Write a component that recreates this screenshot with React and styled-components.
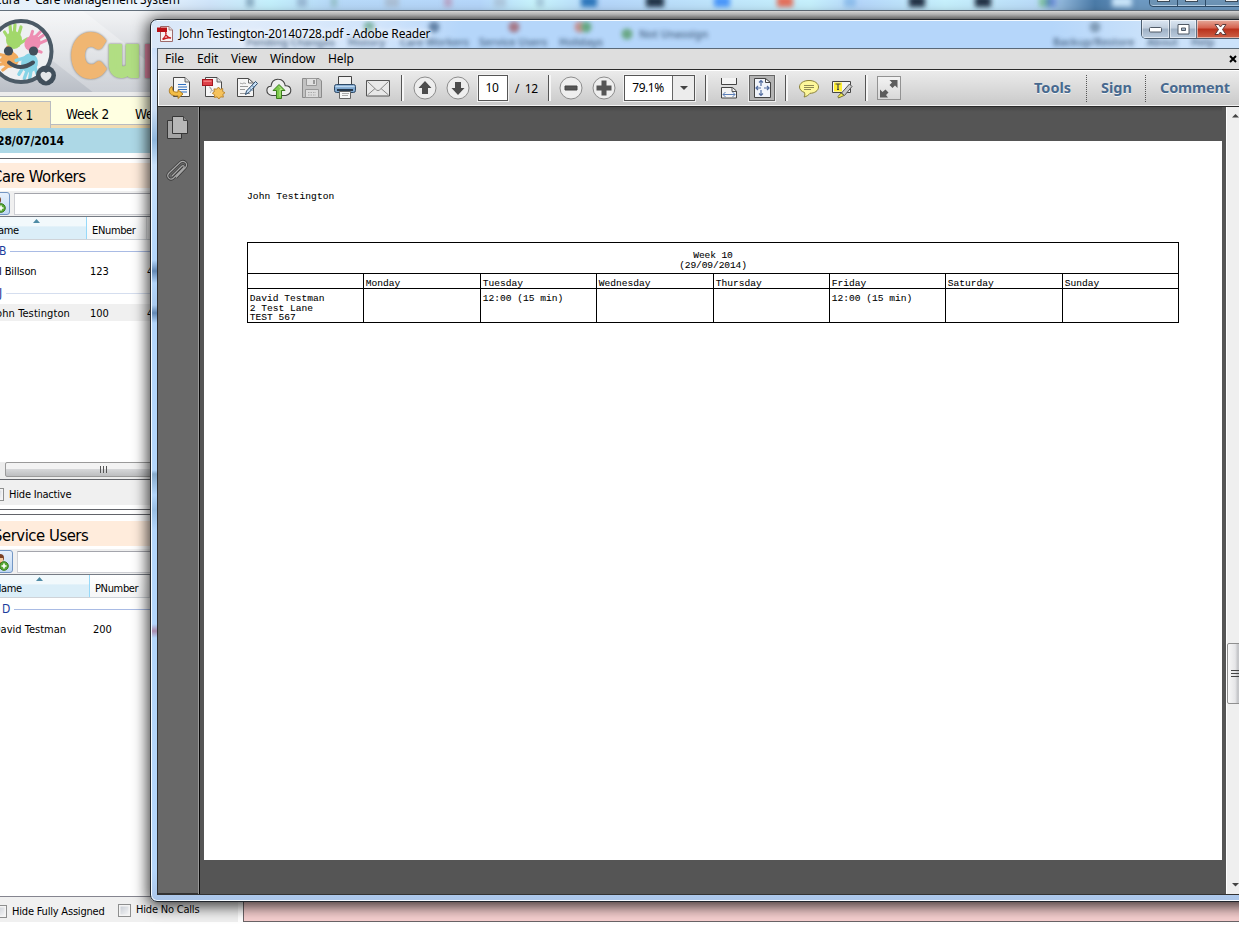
import React from "react";
import styled, { createGlobalStyle, css } from "styled-components";

const tahoma = `"DejaVu Sans Condensed", "DejaVu Sans", sans-serif`;
const segoe = `"Noto Sans", "Open Sans", sans-serif`;

const Global = createGlobalStyle`
  * { box-sizing: border-box; }
  html, body { margin: 0; padding: 0; background: #fff; }
  body { overflow: hidden; font-family: ${segoe}; font-size: 12px; color: #000; }
  svg { display: block; flex: none; }
`;

const Desktop = styled.main`
  position: relative;
  width: 1239px;
  height: 927px;
  overflow: hidden;
  background: #fff;
`;

/* ---------- Cura application behind the reader ---------- */
const CuraApp = styled.div`
  width: 1259px;
  height: 927px;
  margin-left: -20px;
  display: flex;
  flex-direction: column;
`;
const CuraTitle = styled.div`
  position: relative;
  height: 11px;
  flex: none;
  border-bottom: 1px solid #64707c;
  background: linear-gradient(90deg, #e4effa 0, #edf5fc 150px, #d0e5fa 230px, #c4f0fc 290px, #b7d9f8 350px, #b5d6fa 500px, #c8f4fc 555px, #b5d6fa 620px, #c6f0fc 830px, #b5d6fa 880px, #c6f0fc 965px, #b9daf8 1060px, #4b7ba8 1115px, #6d99c2 1160px);
  overflow: hidden;
`;
const CuraTitleText = styled.div`
  line-height: 16px;
  margin: -8px 0 0 14px;
  white-space: pre;
  font-size: 12px;
  letter-spacing: -0.18px;
`;
const GlassBlobs = styled.svg`
  position: absolute;
  left: 20px;
  top: 0;
`;
const BackButtons = styled.div`
  position: absolute;
  left: 1169px;
  top: -12px;
  width: 110px;
  height: 19px;
  display: flex;
  border: 1px solid #2f4d69;
  border-radius: 0 0 4px 4px;
  box-shadow: inset 0 -1px 0 #b5cfe6;
  background: #6d94b6;
`;
const BackButton = styled.span`
  width: ${p => p.$w}px;
  border-right: 1px solid #2f4d69;
  display: flex;
  align-items: flex-end;
  justify-content: center;
  &::after { content: ""; width: 11px; height: 6px; margin-bottom: 4px; border: 1px solid #3b4a58; background: #f3f3f3; }
`;
const Banner = styled.div`
  height: 86px;
  flex: none;
  display: flex;
  padding-left: 20px;
  border-bottom: 1px solid #a9adb2;
  background:
    linear-gradient(#ececec, #ececec) 0 81px / 100% 4px no-repeat,
    linear-gradient(38deg, transparent 0 72px, rgba(255, 255, 255, 0.28) 73px 130px, transparent 131px),
    linear-gradient(180deg, #f3f4f6 0, #dcdfe3 35px, #b9bec6 81px);
`;
const RibbonEdge = styled.div`
  width: 1009px;
  margin-left: auto;
  background: linear-gradient(180deg, #efefef 0, #dcdcdc 4px, #9a9a9a 9px);
`;
const Wordmark = styled.div`
  display: flex;
  width: 107px;
  margin-left: 17px;
  overflow: visible;
  font: 900 54px/86px Lato, sans-serif;
`;
const Letter = styled.span`
  display: block;
  width: ${p => p.$w}px;
  color: ${p => p.$c};
  -webkit-text-stroke: ${p => p.$stroke}px ${p => p.$c};
  transform: scaleX(${p => p.$s});
  transform-origin: left;
  margin-top: ${p => p.$top || 1}px;
  filter: drop-shadow(0 0 1px #777);
`;
const WeekTabs = styled.div`
  height: 31px;
  flex: none;
  display: flex;
  align-items: flex-start;
  background: #ffffe1;
  border-bottom: 3px solid #f2ddb3;
`;
const WeekTab = styled.div`
  height: ${p => (p.$on ? 27 : 28)}px;
  margin-top: ${p => (p.$on ? 4 : 0)}px;
  padding-top: ${p => (p.$on ? 4 : 8)}px;
  padding-left: ${p => p.$pad}px;
  width: ${p => p.$w}px;
  font: 13.5px/18px ${tahoma};
  letter-spacing: -0.3px;
  white-space: nowrap;
  overflow: hidden;
  ${p => p.$on ? css`background: #f3dfb6; border: 1px solid #b9bcc0; border-bottom: 0;` : css`border-bottom: 1px solid #b9bcc0;`}
`;
const DateBar = styled.div`
  height: 25px;
  flex: none;
  padding-left: 17px;
  background: #add8e6;
  font: bold 12px/27px ${tahoma};
  letter-spacing: -0.1px;
`;
const Rule = styled.div`
  height: 1px;
  flex: none;
  margin-top: ${p => p.$gap || 0}px;
  background: #62646a;
`;
const Panel = styled.section`
  display: flex;
  flex-direction: column;
  height: ${p => p.$h}px;
  flex: none;
  padding-top: ${p => p.$top}px;
  width: 400px;
`;
const Heading = styled.h2`
  margin: 0;
  height: 25px;
  flex: none;
  padding-left: ${p => p.$in}px;
  background: #ffecdc;
  font: normal 16.5px/${p => p.$lh || 28}px ${tahoma};
  letter-spacing: -0.45px;
`;
const SearchRow = styled.div`
  display: flex;
  align-items: flex-end;
  height: 29px;
  flex: none;
  padding: 0 0 1px ${p => 5 + p.$in}px;
  background: #f0f0f0;
  border-top: 3px solid #fff;
  border-bottom: 1px solid #767b84;
`;
const AddButton = styled.button`
  width: 25px;
  height: 23px;
  padding: 0 3px 0 0;
  display: flex;
  justify-content: flex-end;
  align-items: center;
  border: 1px solid #7396c4;
  border-radius: 3px;
  background: linear-gradient(#e6f0fc, #bfd8f4);
`;
const SearchInput = styled.div`
  height: 22px;
  flex: 1;
  margin-left: 4px;
  border: 1px solid #cfd0d5;
  border-top-color: #a4a5ac;
  background: #fff;
`;
const ListHead = styled.div`
  height: 23px;
  flex: none;
  display: flex;
  font: 11px/27px ${tahoma};
  letter-spacing: -0.35px;
  border-bottom: 1px solid #cfd3d8;
`;
const HeadCell = styled.div`
  position: relative;
  width: ${p => p.$w}px;
  padding-left: ${p => p.$pad}px;
  overflow: hidden;
  border-right: 1px solid ${p => (p.$sorted ? "#96d9f9" : "#dedfe1")};
  background: ${p => (p.$sorted ? "linear-gradient(#f2f9fc 0 40%, #dbeef8 45% 100%)" : "linear-gradient(#fff, #f5f6f7)")};
`;
const SortMark = styled.svg`
  position: absolute;
  left: ${p => p.$x}px;
  top: 2px;
`;
const Group = styled.div`
  display: flex;
  align-items: center;
  height: 21px;
  flex: none;
  padding: 1px 0 0 ${p => p.$x}px;
  gap: 4px;
  color: #1a3c9c;
  font: 12px/21px ${tahoma};
  &::after { content: ""; height: 1px; flex: 1; background: ${p => p.$line || "#a9bbe4"}; }
`;
const Row = styled.div`
  display: flex;
  height: 21px;
  flex: none;
  font: 11px/22px ${tahoma};
  background: ${p => (p.$on ? "linear-gradient(#fff 0 1px, #f0f0f0 1px 18px, #fff 18px)" : "transparent")};
`;
const Cell = styled.div`
  width: ${p => p.$w}px;
  margin-left: ${p => p.$x || 0}px;
  letter-spacing: ${p => p.$ls || 0}px;
  white-space: nowrap;
`;
const Grow = styled.div`flex: 1;`;
const HScroll = styled.div`
  height: 17px;
  flex: none;
  padding-left: 25px;
  background: #ededed;
`;
const HThumb = styled.div`
  height: 15px;
  width: 196px;
  display: flex;
  align-items: center;
  justify-content: center;
  border: 1px solid #9a9a9a;
  border-radius: 2px;
  background: linear-gradient(#f3f3f3 0 45%, #d5d6d8 50%, #bdbec0);
`;
const Footer = styled.div`
  height: 25px;
  width: ${p => p.$w || 258}px;
  flex: none;
  display: flex;
  background: #f0f0f0;
  font: 11px/28px ${tahoma};
  letter-spacing: -0.2px;
  padding-left: 11px;
`;
const CheckItem = styled.label`
  display: flex;
  align-items: center;
  gap: 5px;
  width: ${p => p.$w}px;
  height: ${p => p.$h || 29}px;
  white-space: nowrap;
`;
const CheckBox = styled.span`
  width: 13px;
  height: 13px;
  flex: none;
  margin-left: ${p => p.$l || 0}px;
  border: 1px solid #8e8f8f;
  background: linear-gradient(135deg, #c3c8d0, #fafafa);
  box-shadow: inset 0 0 0 1.5px #f4f4f4;
`;
const BottomRow = styled.div`
  display: flex;
  border-top: 1px solid #85858f;
  height: 26px;
  flex: none;
`;
const PinkPane = styled.div`
  flex: 1;
  margin-left: 5px;
  border: 1px solid #6b6467;
  border-right: 0;
  background: #f6cfcf;
`;

/* ---------- Adobe Reader window ---------- */
const Reader = styled.div`
  position: absolute;
  left: 150px;
  top: 19px;
  width: 1120px;
  height: 883px;
  display: flex;
  flex-direction: column;
  border: 1px solid #20252c;
  border-radius: 7px;
  box-shadow: inset 0 0 0 1px #f4faff, 0 2px 15px 2px rgba(0, 0, 0, 0.8);
  padding: 0 6px 6px;
  overflow: hidden;
  background: linear-gradient(180deg, #b9d9fa 0, #d4e4fa 40px, #cadcf2 90px, #8fb6dc 120px, #c9e2fb 145px, #b3d6fb 240px, #6288b4 251px, #b3d6fb 263px, #aacbf0 285px, #6288b4 293px, #b3d6fb 303px, #b3d6fb 450px, #86aacb 454px, #b3d6fb 475px, #98bee3 490px, #b3d6fb 510px, #b3d6fb 604px, #a98cad 611px, #b3d6fb 618px, #b5d6fa 850px, #abc5e8 100%);
`;
const TitleBar = styled.header`
  position: relative;
  height: 27px;
  flex: none;
  display: flex;
  margin: 1px -5px 0;
  padding-left: 5px;
  border-radius: 6px 6px 0 0;
  background: linear-gradient(90deg, #d9e7f8 0, #dfebfa 100px, #d0e4fb 230px, #b5d6fa 310px, #b5d6fa 900px, #cbe2fa 1000px);
`;
const TitleText = styled.div`
  position: relative;
  margin: 3px 0 0 5px;
  line-height: 20px;
  font-size: 12px;
  letter-spacing: -0.17px;
  white-space: nowrap;
  text-shadow: 0 0 5px #fff, 0 0 8px #fff;
`;
const GlassLayer = styled.svg`
  position: absolute;
  left: -1px;
  top: 0;
`;
const WinButtons = styled.div`
  position: absolute;
  left: 989px;
  top: -1px;
  height: 19px;
  display: flex;
  border: 1px solid #4c5e70;
  border-top: 0;
  border-radius: 0 0 5px 5px;
  overflow: hidden;
`;
const WinButton = styled.div`
  width: ${p => p.$w}px;
  display: flex;
  align-items: center;
  justify-content: center;
  border-right: 1px solid #5f6f80;
  box-shadow: inset 0 0 0 1px rgba(255, 255, 255, 0.5);
  background: ${p => (p.$close ? "linear-gradient(#e5aa9b 0, #d5604c 45%, #b9301b 50%, #cd6147 100%)" : "linear-gradient(#dce7f3 0, #c1cedd 45%, #9fb1c5 50%, #bccddf 100%)")};
`;
const MenuBar = styled.nav`
  height: 21px;
  flex: none;
  display: flex;
  align-items: center;
  border-top: 1px solid #5b6a78;
  border-left: 1px solid #4f5a65;
  background: #dedede;
  font-size: 12px;
`;
const MenuItem = styled.span`
  width: ${p => p.$w}px;
  padding-left: ${p => p.$pad || 0}px;
  line-height: 20px;
  white-space: nowrap;
  letter-spacing: -0.08px;
`;
const ToolBar = styled.div`
  height: 38px;
  flex: none;
  display: flex;
  align-items: center;
  padding-left: 6px;
  border: 1px solid #2a2a2a;
  border-right: 0;
  box-shadow: inset 1px 1px 0 #fff, inset 0 -1px 0 #f2f2f2;
  background: linear-gradient(#ececec, #c9c9c9);
`;
const Slot = styled.div`
  width: 33px;
  height: 33px;
  flex: none;
  display: flex;
  align-items: center;
  justify-content: center;
  padding-right: ${p => (p.$wide ? 0 : 1)}px;
  padding-left: ${p => (p.$wide ? 1 : 0)}px;
`;
const Sep = styled.div`
  width: 13px;
  flex: none;
  height: 26px;
  margin-left: ${p => p.$l || 0}px;
  padding-left: 2px;
  display: flex;
  justify-content: center;
  &::before { content: ""; width: 2px; border-left: 1px solid #555; background: #f6f6f6; }
`;
const PageBox = styled.div`
  width: 30px;
  height: 26px;
  margin-left: 4px;
  padding-right: 2px;
  border: 1px solid #555;
  background: #fff;
  text-align: center;
  line-height: 24px;
  letter-spacing: -0.4px;
  box-shadow: 0 0 0 1px #f1f1f1;
`;
const PageCount = styled.div`
  width: 33px;
  padding-left: 7px;
  white-space: pre;
  letter-spacing: -0.3px;
`;
const Zoom = styled.div`
  width: 71px;
  height: 26px;
  margin-left: 4px;
  margin-right: 4px;
  display: flex;
  border: 1px solid #555;
  background: #fff;
  line-height: 24px;
  letter-spacing: -0.5px;
  box-shadow: 0 0 0 1px #f1f1f1;
`;
const ZoomValue = styled.div`
  width: 48px;
  padding-right: 1px;
  text-align: center;
  border-right: 1px solid #666;
`;
const ZoomArrow = styled.div`
  flex: 1;
  display: flex;
  align-items: center;
  justify-content: center;
  background: #ececec;
`;
const Fitted = styled.div`
  width: 26px;
  height: 26px;
  display: flex;
  align-items: center;
  justify-content: center;
  border: 1px solid #666;
  background: #b4b4b4;
  box-shadow: 0 0 0 1px #eee;
`;
const FullBox = styled.div`
  width: 24px;
  height: 24px;
  border: 1px solid #929292;
  background: linear-gradient(#f3f3f3, #d8d8d8);
`;
const PaneLinks = styled.div`
  display: flex;
  margin-left: 116px;
`;
const PaneLink = styled.div`
  width: ${p => p.$w}px;
  padding-left: ${p => p.$pad}px;
  height: 27px;
  line-height: 25px;
  border-right: ${p => (p.$last ? "0" : "1px dotted #555")};
  color: #47698f;
  font-size: 14.5px;
  font-weight: 700;
  letter-spacing: ${p => p.$ls || 0}px;
  text-shadow: 0 1px 0 #f4f4f4;
`;
const Body = styled.div`
  flex: 1;
  min-height: 0;
  display: flex;
  border-left: 1px solid #2c2c2c;
  border-bottom: 1px solid #333;
  background: #555;
`;
const Rail = styled.aside`
  width: 42px;
  flex: none;
  padding: 8px 0 0 7px;
  display: flex;
  flex-direction: column;
  gap: 18px;
  border-right: 1px solid #0a0a0a;
  box-shadow: inset -1px 0 0 #979797, inset 0 -1px 0 #333;
  background: #686868;
`;
const Canvas = styled.div`
  width: 1022px;
  flex: none;
  padding: 34px 0 0 4px;
  background: linear-gradient(#484848 0, #555 5px);
`;
const Page = styled.article`
  width: 1018px;
  height: 719px;
  padding: 51px 0 0 43px;
  background: #fff;
  font: 9.6px/9.7px "Liberation Mono", monospace;
  -webkit-text-stroke: 0.08px #000;
`;
const Name = styled.div`
  height: 50px;
  letter-spacing: 0.07px;
`;
const Table = styled.div`
  width: 932px;
  border: 1px solid #000;
  display: grid;
  grid-template-columns: 116px 117px 116px 117px 116px 116px 117px 115px;
  grid-template-rows: 31px 15px 33px;
`;
const WeekCell = styled.div`
  grid-column: 1 / -1;
  padding-top: 8px;
  border-bottom: 1px solid #000;
  text-align: center;
  letter-spacing: -0.12px;
`;
const TableCell = styled.div`
  padding: 5px 0 0 1.7px;
  white-space: pre;
  border-right: ${p => (p.$last ? 0 : 1)}px solid #000;
  border-bottom: ${p => (p.$head ? 1 : 0)}px solid #000;
`;
const VScroll = styled.div`
  flex: 1;
  display: flex;
  flex-direction: column;
  margin-left: 4px;
  border-left: 1px solid #fff;
  background: #efefef;
`;
const ScrollArrow = styled.div`
  height: 14px;
  padding: ${p => p.$top}px 0 0 5px;
`;
const VThumb = styled.div`
  margin: 522px 0 167px;
  width: 18px;
  height: 61px;
  flex: none;
  display: flex;
  align-items: center;
  padding-left: 3px;
  border: 1px solid #8f8f8f;
  border-radius: 2px;
  background: linear-gradient(90deg, #f7f7f7 0, #e6e6e8 45%, #c6c7ca 60%);
`;
const TitleIcon = styled.svg`
  margin-top: 5px;
`;

/* ---------- Icons ---------- */
const Paper = ({ x = 0, y = 0, w = 16, h = 20, fill = "#f7f7f7", stroke = "#4a4a4a" }) => (
  <>
    <path d={`M${x + 0.5} ${y + 0.5}H${x + w - 5}L${x + w - 0.5} ${y + 5}V${y + h - 0.5}H${x + 0.5}Z`} fill={fill} stroke={stroke} />
    <path d={`M${x + w - 5} ${y + 0.5}V${y + 5}H${x + w - 0.5}`} fill="#ddd" stroke={stroke} strokeWidth=".8" />
  </>
);
const Svg = ({ w = 24, h = 24, children }) => (
  <svg width={w} height={h} viewBox={`0 0 ${w} ${h}`} fill="none">{children}</svg>
);
const OpenIcon = () => (
  <Svg><Paper x={5} y={1} w={17} h={20} />
    <path d="M10 8.500h8M10 11h9M10 13.500h9M12 16h7" stroke="#2f6fc0" strokeWidth="1.200" />
    <path d="M4 10.500C.5 12 .5 17 3.500 18.800C6 20 9 19.800 10 19.800V22.500L15 18L10 13.800V16C6.500 16.500 4 15 4.500 12Z" fill="#f3bd45" stroke="#a8741a" strokeWidth=".9" /></Svg>
);
const CreateIcon = () => (
  <Svg><Paper x={4} y={1} w={17} h={20} />
    <path d="M8 11c3 0 3 4 1 6m0-5c3 4 5 4 7 3" stroke="#aaa" />
    <rect x="1.500" y="3.500" width="10" height="6" fill="#dc3f47" stroke="#a4161e" />
    <path d="M2.500 4.500h8v1.500h-8z" fill="#f27a7d" />
    <path d="M17.500 11l1.600 2.300 2.700-.7-.2 2.800 2.400 1.300-2.200 1.700.6 2.700-2.800-.2L17.900 23l-1.800-2.100-2.700.6.3-2.700-2.400-1.500 2.100-1.700-.5-2.700 2.800.2z" fill="#f5c25b" stroke="#b5802b" strokeWidth=".9" /></Svg>
);
const EditIcon = () => (
  <Svg><path d="M2.500 2.500H13.500L18.500 7V20.500H2.500Z" fill="#f5f5f5" stroke="#4a4a4a" /><path d="M13.500 2.500V7H18.500" stroke="#666" />
    <path d="M5 7.500c1-1 2 1 3 0s2 0 3 0M5 10.500h8M5 13.500h5M5 17.500h10" stroke="#999" />
    <path d="M20.500 5.500L22.500 7.500L14 16.500L10.500 18.500L11.500 15Z" fill="#c8e0f6" stroke="#2d4b6b" />
    <path d="M14.500 12.500l3 2M17 9.500l2.500 2" stroke="#5e83a8" /></Svg>
);
const CloudIcon = () => (
  <Svg w={26}><path d="M6 19.500C-1 18-.3 10.500 5 10.300C5.500 5 9 3 12.500 3.200C16.500 3.300 19 6.500 19.200 9.800C26 9.500 27 17.500 20 19.500Z" fill="#eee" stroke="#444" strokeWidth="1.100" />
    <path d="M13 8.500L19 14.500H15.500V22.500H10.500V14.500H7Z" fill="#7cc84a" stroke="#3d7d1e" /><path d="M13 10.500l3 3h-2v7" stroke="#b8ec8e" /></Svg>
);
const SaveIcon = () => (
  <Svg><path d="M2.500 2.500H19L21.500 5V21.500H2.500Z" fill="#c2c2c2" stroke="#8b8b8b" /><path d="M6.500 2.500h10v7h-10z" fill="#e0e0e0" stroke="#999" /><path d="M13 4h2v4h-2z" fill="#999" /><path d="M5.500 13.500h13v8h-13z" fill="#ddd" stroke="#999" /><path d="M8 16.500h8M8 19h8" stroke="#aaa" strokeDasharray="1.500 1" /></Svg>
);
const PrintIcon = () => (
  <Svg><path d="M5.500 .5h13v9h-13z" fill="#f2f2f2" stroke="#444" />
    <rect x="1.500" y="8.500" width="21" height="8" rx="2" fill="#7ea7cf" stroke="#2e4965" />
    <path d="M2.500 10.500h19" stroke="#bcd7ef" strokeWidth="1.500" /><path d="M4 14h16" stroke="#26394d" strokeWidth="2" />
    <path d="M6.500 15.500h11v7h-11z" fill="#f7f7f7" stroke="#666" /><path d="M9 17.500h7M9 19.500h6" stroke="#aaa" /></Svg>
);
const MailIcon = () => (
  <Svg><path d="M.5 4.500h23v15.500H.5z" fill="#e9e9e9" stroke="#555" /><path d="M1.500 5.500l9 8.500q1.500 1.200 3 0l9-8.500M1.500 19l7.500-6.500M22.500 19l-7.500-6.500" stroke="#888" /></Svg>
);
const Round = ({ children }) => (
  <Svg><circle cx="12" cy="12" r="11" fill="#eee" stroke="#8c8c8c" />{children}</Svg>
);
const UpIcon = () => <Round><path d="M12 5L18.500 12H15v6H9v-6H5.500Z" fill="#4d4d4d" /></Round>;
const DownIcon = () => <Round><path d="M12 19L18.500 12H15V6H9v6H5.500Z" fill="#4d4d4d" /></Round>;
const MinusIcon = () => <Round><path d="M6 10h12v4H6z" fill="#555" stroke="#444" /></Round>;
const PlusIcon = () => <Round><path d="M9.500 4.500h5v5h5v5h-5v5h-5v-5h-5v-5h5z" fill="#555" /></Round>;
const WidthIcon = () => (
  <Svg><path d="M4.500 2v6.500h15V2" fill="#f4f4f4" stroke="#444" /><path d="M4.500 22V11.500H15.500L19.500 15V22Z" fill="#f4f4f4" stroke="#444" /><path d="M15 11.500v4h4.500" stroke="#555" /><path d="M6 18.500h12M8.500 16l-2.500 2.500 2.500 2.500M15.500 16l2.500 2.500-2.500 2.500" stroke="#5c7fb8" /></Svg>
);
const FitIcon = () => (
  <Svg w={22} h={22}><path d="M3.500 1.500H14.500L19.500 5.500V20.500H3.500Z" fill="#f1f4fa" stroke="#444" /><path d="M14.500 1.500v4h5" stroke="#444" />
    <path d="M10 3v6M10 13v6M5 11h5M13 11h5M8 5.500L10 3.500L12 5.500M8 16.500L10 18.500L12 16.500M7 9L5 11L7 13M16 9L18 11L16 13" stroke="#536da0" strokeWidth="1.200" /></Svg>
);
const NoteIcon = () => (
  <Svg><path d="M12 4.500c5.500 0 9.500 2.800 9.500 6.500s-4 6.300-8.500 6.300c-1.500 2-3.500 3.200-6 3.700 1-1.400 1-2.500.5-4.500C4.500 15.500 2.500 13.500 2.500 11c0-3.700 4-6.500 9.500-6.500Z" fill="#fdf79b" stroke="#8a8137" />
    <path d="M7 9.500h10M7 11.500h10M7 13.500h7" stroke="#8f8a55" /></Svg>
);
const MarkIcon = () => (
  <Svg><path d="M2.500 5.500h18v11h-18z" fill="#f4f4f4" stroke="#444" /><path d="M4 6.500h8v9H4z" fill="#ffef34" /><path d="M5.500 8h5M8 8v5.500M7 13.500h2" stroke="#444" strokeWidth="1.200" />
    <path d="M19.500 8l2.500 2.500-7.500 9-3-2.500z" fill="#c9c9c9" stroke="#555" /><path d="M11 17l3 2.500-5.500 2.500-.5-1.500z" fill="#efe84d" stroke="#77723b" /></Svg>
);
const FullIcon = () => (
  <Svg w={22} h={22}><path d="M11.500 3H19.500V11L17 8.500L14.500 11L11.500 8L14 5.500ZM2 12.500L4.500 15L7.500 12.500L10.500 15.500L8 18L10 20.500H2Z" fill="#5c5c5c" /></Svg>
);
const PagesIcon = () => (
  <Svg w={24} h={26}><path d="M2.500 5.500h14v18h-14z" fill="#a4a4a4" stroke="#373737" /><path d="M7.500 1.500H18.500L22.500 5.500V18.500H7.500Z" fill="#b7b7b7" stroke="#373737" /><path d="M18.500 1.500v4h4" fill="#888" stroke="#444" /></Svg>
);
const clip = "M7 17L16.500 7.500C18.500 5.500 20 7.500 18.500 9L8.500 19C5.500 22 .5 18 4 14L15 3.500C18.500.5 24 4.500 20.500 8.500L11 18.500";
const ClipIcon = () => (
  <Svg w={24} h={26}><path d={clip} stroke="#3c3c3c" strokeWidth="2.800" /><path d={clip} stroke="#a6a6a6" strokeWidth="1.200" /></Svg>
);
const PdfIcon = () => (
  <TitleIcon width="17" height="17" viewBox="0 0 17 17" fill="none">
    <path d="M3.500.5H12L15.500 4V15.500H3.500Z" fill="#f8f3f3" stroke="#9c6a6a" /><path d="M0 1.500h10v4.500H0z" fill="#b91116" /><path d="M12 .5V4h3.500" fill="#ddd" stroke="#9c6a6a" strokeWidth=".8" />
    <path d="M8.500 6c1.500 2-.5 5-3 7.500m3-6c1 2.500 3 4.500 5.500 4.500-3-.7-5.500 0-8 1.500" stroke="#c91c20" strokeWidth="1.300" />
  </TitleIcon>
);
const AddUser = () => (
  <svg width="18" height="18" viewBox="0 0 18 18"><circle cx="9" cy="5" r="4" fill="#7b4126" /><path d="M6 5h6v3q-3 3-6 0z" fill="#f6ca9f" /><path d="M2 15q1-6 7-6t6 6z" fill="#d96f3c" /><circle cx="13" cy="13" r="4.300" fill="#58a834" stroke="#38791d" /><path d="M10.500 13h5m-2.500-2.500v5" stroke="#fff" strokeWidth="1.600" /></svg>
);
const Hand = ({ c, t }) => (
  <g transform={t} stroke={c} strokeLinecap="round" fill={c}>
    <ellipse cx="0" cy="2" rx="8" ry="9" stroke="none" />
    <path d="M-5 1L-9.500-6M-3 -2L-4-12.500M0 -2L1-13.500M4 -1L7-11M5 6L13 1" strokeWidth="3.200" />
  </g>
);
const Mascot = () => (
  <svg width="56" height="85" viewBox="0 0 56 85" fill="none">
    <circle cx="21" cy="40.500" r="31" fill="#eef0f2" />
    <Hand c="#a2d86b" t="translate(14 27)" />
    <Hand c="#ee8db2" t="translate(34 31) rotate(50) scale(.95)" />
    <Hand c="#f1ab5f" t="translate(8 49) rotate(-95)" />
    <Hand c="#86d3e6" t="translate(29 54) rotate(195) scale(1.050)" />
    <circle cx="21" cy="40.500" r="30.500" stroke="#4b5a66" strokeWidth="4" />
    <circle cx="8.500" cy="40" r="4.600" fill="#414f5b" /><circle cx="33.500" cy="40" r="4.600" fill="#414f5b" />
    <path d="M9 51.500Q20 60.500 33 51.500" stroke="#414f5b" strokeWidth="4" strokeLinecap="round" />
    <circle cx="46" cy="64.500" r="10" fill="#414f5b" />
    <path d="M46 70.500q-6-3.500-5.500-7.500 2-4 5.500-1 3.500-3 5.500 1 .5 4-5.500 7.500" fill="#e4e6e9" />
  </svg>
);
const Triangle = ({ up, w = 8 }) => (
  <svg width={w} height={w / 2} viewBox="0 0 8 4"><path d={up ? "M0 4L4 0L8 4Z" : "M0 0L4 4L8 0Z"} fill="#444" /></svg>
);

const Sorted = ({ x }) => (
  <SortMark $x={x} width="7" height="4" viewBox="0 0 7 4"><path d="M0 4L3.500 0L7 4Z" fill="#4e8ba5" /></SortMark>
);

const BLOBS = [[250, "#50718f", 4], [302, "#7690b0", 5], [334, "#73a89b", 3], [392, "#a0a8b4", 7], [448, "#b9779a", 4], [500, "#9fb0c4", 6], [540, "#86a2bc", 4], [589, "#2f78bd", 8], [655, "#243648", 9], [722, "#4b98fb", 8], [785, "#e4705c", 8], [850, "#66a3df", 6], [917, "#203144", 8], [983, "#203144", 8], [1045, "#4eae4f", 6], [1051, "#3c5cd0", 5]];
const GHOSTS = [[246, 46, "Pending Changes"], [348, 46, "History"], [400, 46, "Care Workers"], [479, 46, "Service Users"], [559, 46, "Holidays"], [639, 38, "Not Unassign"], [1053, 46, "Backup/Restore"], [1147, 46, "About"], [1191, 46, "Help"]];
const GHOST_ICONS = [[369, "#6fab98"], [434, "#55749a"], [514, "#a36974"], [580, "#c9817c"], [586, "#58a070"], [627, "#5da072"], [1095, "#7793ad"]];
const DAYS = ["", "Monday", "Tuesday", "Wednesday", "Thursday", "Friday", "Saturday", "Sunday"];
const VISITS = ["David Testman\n2 Test Lane\nTEST 567", "", "12:00 (15 min)", "", "", "12:00 (15 min)", "", ""];

const List = ({ shift, column }) => (
  <ListHead>
    <HeadCell $sorted $w={107 + shift} $pad={11 + shift}><Sorted x={53 + shift} />Name</HeadCell>
    <HeadCell $w={60} $pad={5}>{column}</HeadCell>
    <HeadCell $w={150} $pad={5} />
  </ListHead>
);

export default function App() {
  return (
    <Desktop>
      <Global />
      <CuraApp>
        <CuraTitle>
          <GlassBlobs width="1239" height="10">
            <defs><filter id="soft" x="-5%" y="-100%" width="110%" height="300%"><feGaussianBlur stdDeviation="2.500" /></filter></defs>
            <g filter="url(#soft)">{BLOBS.map(([x, c, r]) => <rect key={x} x={x - r} y="-4" width={r * 2} height="11" fill={c} opacity={r > 7 ? 1 : 0.5} />)}
              <rect x="1112" y="-3" width="20" height="10" fill="#c9e5fa" /></g>
          </GlassBlobs>
          <CuraTitleText>{"Cura  -  Care Management System"}</CuraTitleText>
          <BackButtons><BackButton $w={28} /><BackButton $w={28} /><BackButton $w={52} /></BackButtons>
        </CuraTitle>
        <Banner>
          <Mascot />
          <Wordmark>
            <Letter $c="#f0b672" $w={36} $s={0.84} $stroke={8}>C</Letter>
            <Letter $c="#b1de83" $w={36} $s={0.98} $stroke={6}>u</Letter>
            <Letter $c="#e287a3" $w={30} $s={0.95} $stroke={6}>r</Letter>
          </Wordmark>
          <RibbonEdge />
        </Banner>
        <WeekTabs>
          <WeekTab $on $w={71} $pad={9}>Week 1</WeekTab>
          <WeekTab $w={69} $pad={15}>Week 2</WeekTab>
          <WeekTab $w={1119} $pad={15}>Week 3</WeekTab>
        </WeekTabs>
        <DateBar>28/07/2014</DateBar>
        <Rule $gap={5} />
        <Panel $h={346} $top={4}>
          <Heading $in={12}>Care Workers</Heading>
          <SearchRow $in={0}><AddButton><AddUser /></AddButton><SearchInput /></SearchRow>
          <List shift={0} column="ENumber" />
          <Group $x={19}>B</Group>
          <Row><Cell $x={7} $w={103} $ls={-0.1}>Bill Billson</Cell><Cell $w={57}>123</Cell><Cell $w={40}>4</Cell></Row>
          <Group $x={19} $line="#d5deef">J</Group>
          <Row $on><Cell $x={13} $w={97} $ls={0.1}>John Testington</Cell><Cell $w={57}>100</Cell><Cell $w={40}>4</Cell></Row>
          <Grow />
          <HScroll><HThumb><svg width="9" height="7"><path d="M1.500 0v7M4.500 0v7M7.500 0v7" stroke="#555" /></svg></HThumb></HScroll>
          <Rule />
          <Footer $w={400}><CheckItem $w={200}><CheckBox />Hide Inactive</CheckItem></Footer>
        </Panel>
        <Rule $gap={4} />
        <Rule $gap={4} />
        <Panel $h={381} $top={6}>
          <Heading $in={13} $lh={29}>Service Users</Heading>
          <SearchRow $in={3}><AddButton><AddUser /></AddButton><SearchInput /></SearchRow>
          <List shift={3} column="PNumber" />
          <Group $x={22}>D</Group>
          <Row><Cell $x={13} $w={100}>David Testman</Cell><Cell $w={56}>200</Cell></Row>
        </Panel>
        <BottomRow>
          <Footer>
            <CheckItem $w={127}><CheckBox $l={3} />Hide Fully Assigned</CheckItem>
            <CheckItem $w={120} $h={26}><CheckBox />Hide No Calls</CheckItem>
          </Footer>
          <PinkPane />
        </BottomRow>
      </CuraApp>

      <Reader>
        <TitleBar>
          <GlassLayer width="1090" height="27" viewBox="151 21 1090 27">
            <defs><filter id="haze"><feGaussianBlur stdDeviation="1.900" /></filter></defs>
            <g filter="url(#haze)" fontFamily="Noto Sans, sans-serif" fontSize="10.500" fontWeight="600" fill="#3d5878" opacity=".85">
              {GHOSTS.map(([x, y, t]) => <text key={t} x={x} y={y}>{t}</text>)}
              {GHOST_ICONS.map(([x, c]) => <circle key={x} cx={x} cy={x === 627 ? 34 : 27} r="5.500" fill={c} />)}
            </g>
          </GlassLayer>
          <PdfIcon />
          <TitleText>John Testington-20140728.pdf - Adobe Reader</TitleText>
          <WinButtons>
            <WinButton $w={28}><Svg w={13} h={7}><rect x=".5" y="1.500" width="12" height="4.500" rx="1" fill="#fff" stroke="#505a66" /></Svg></WinButton>
            <WinButton $w={27}><Svg w={13} h={11}><path d="M1 .5h11v9.500H1zM4.500 4v2.500h4V4z" fill="#fff" fillRule="evenodd" stroke="#505a66" /></Svg></WinButton>
            <WinButton $close $w={48}><Svg w={13} h={11}><path d="M1 .5h3.500l2 2.500 2-2.500H12L8.500 5.500 12 10.500H8.500l-2-2.500-2 2.500H1l3.500-5z" fill="#fff" stroke="#5b3b3b" /></Svg></WinButton>
          </WinButtons>
        </TitleBar>
        <MenuBar>
          <MenuItem $w={39} $pad={7}>File</MenuItem>
          <MenuItem $w={34}>Edit</MenuItem>
          <MenuItem $w={39}>View</MenuItem>
          <MenuItem $w={58}>Window</MenuItem>
          <MenuItem $w={901}>Help</MenuItem>
          <Svg w={8} h={8}><path d="M1 1l6 6M7 1L1 7" stroke="#000" strokeWidth="2" /></Svg>
        </MenuBar>
        <ToolBar>
          <Slot><OpenIcon /></Slot><Slot><CreateIcon /></Slot><Slot $wide><EditIcon /></Slot><Slot><CloudIcon /></Slot>
          <Slot><SaveIcon /></Slot><Slot><PrintIcon /></Slot><Slot><MailIcon /></Slot>
          <Sep />
          <Slot $wide><UpIcon /></Slot><Slot $wide><DownIcon /></Slot>
          <PageBox>10</PageBox><PageCount>{"/  12"}</PageCount>
          <Sep $l={1} />
          <Slot><MinusIcon /></Slot><Slot><PlusIcon /></Slot>
          <Zoom style={{ marginLeft: 3 }}><ZoomValue>79.1%</ZoomValue><ZoomArrow><Triangle /></ZoomArrow></Zoom>
          <Sep />
          <Slot $wide><WidthIcon /></Slot><Slot $wide><Fitted><FitIcon /></Fitted></Slot>
          <Sep $l={1} />
          <Slot $wide><NoteIcon /></Slot><Slot $wide><MarkIcon /></Slot>
          <Sep $l={1} />
          <Slot $wide><FullBox><FullIcon /></FullBox></Slot>
          <PaneLinks>
            <PaneLink $w={66} $pad={13}>Tools</PaneLink>
            <PaneLink $w={59} $pad={14}>Sign</PaneLink>
            <PaneLink $w={94} $pad={14} $ls={-0.15} $last>Comment</PaneLink>
          </PaneLinks>
        </ToolBar>
        <Body>
          <Rail><PagesIcon /><ClipIcon /></Rail>
          <Canvas>
            <Page>
              <Name>John Testington</Name>
              <Table>
                <WeekCell>Week 10<br />(29/09/2014)</WeekCell>
                {DAYS.map((d, i) => <TableCell key={i} $head $last={i === 7}>{d}</TableCell>)}
                {VISITS.map((v, i) => <TableCell key={i} $last={i === 7}>{v}</TableCell>)}
              </Table>
            </Page>
          </Canvas>
          <VScroll>
            <ScrollArrow $top={7}><Triangle up w={7} /></ScrollArrow>
            <VThumb><svg width="8" height="9"><path d="M0 1.500h8M0 4.500h8M0 7.500h8" stroke="#444" strokeWidth="1.200" /></svg></VThumb>
            <ScrollArrow $top={12}><Triangle w={7} /></ScrollArrow>
          </VScroll>
        </Body>
      </Reader>
    </Desktop>
  );
}
